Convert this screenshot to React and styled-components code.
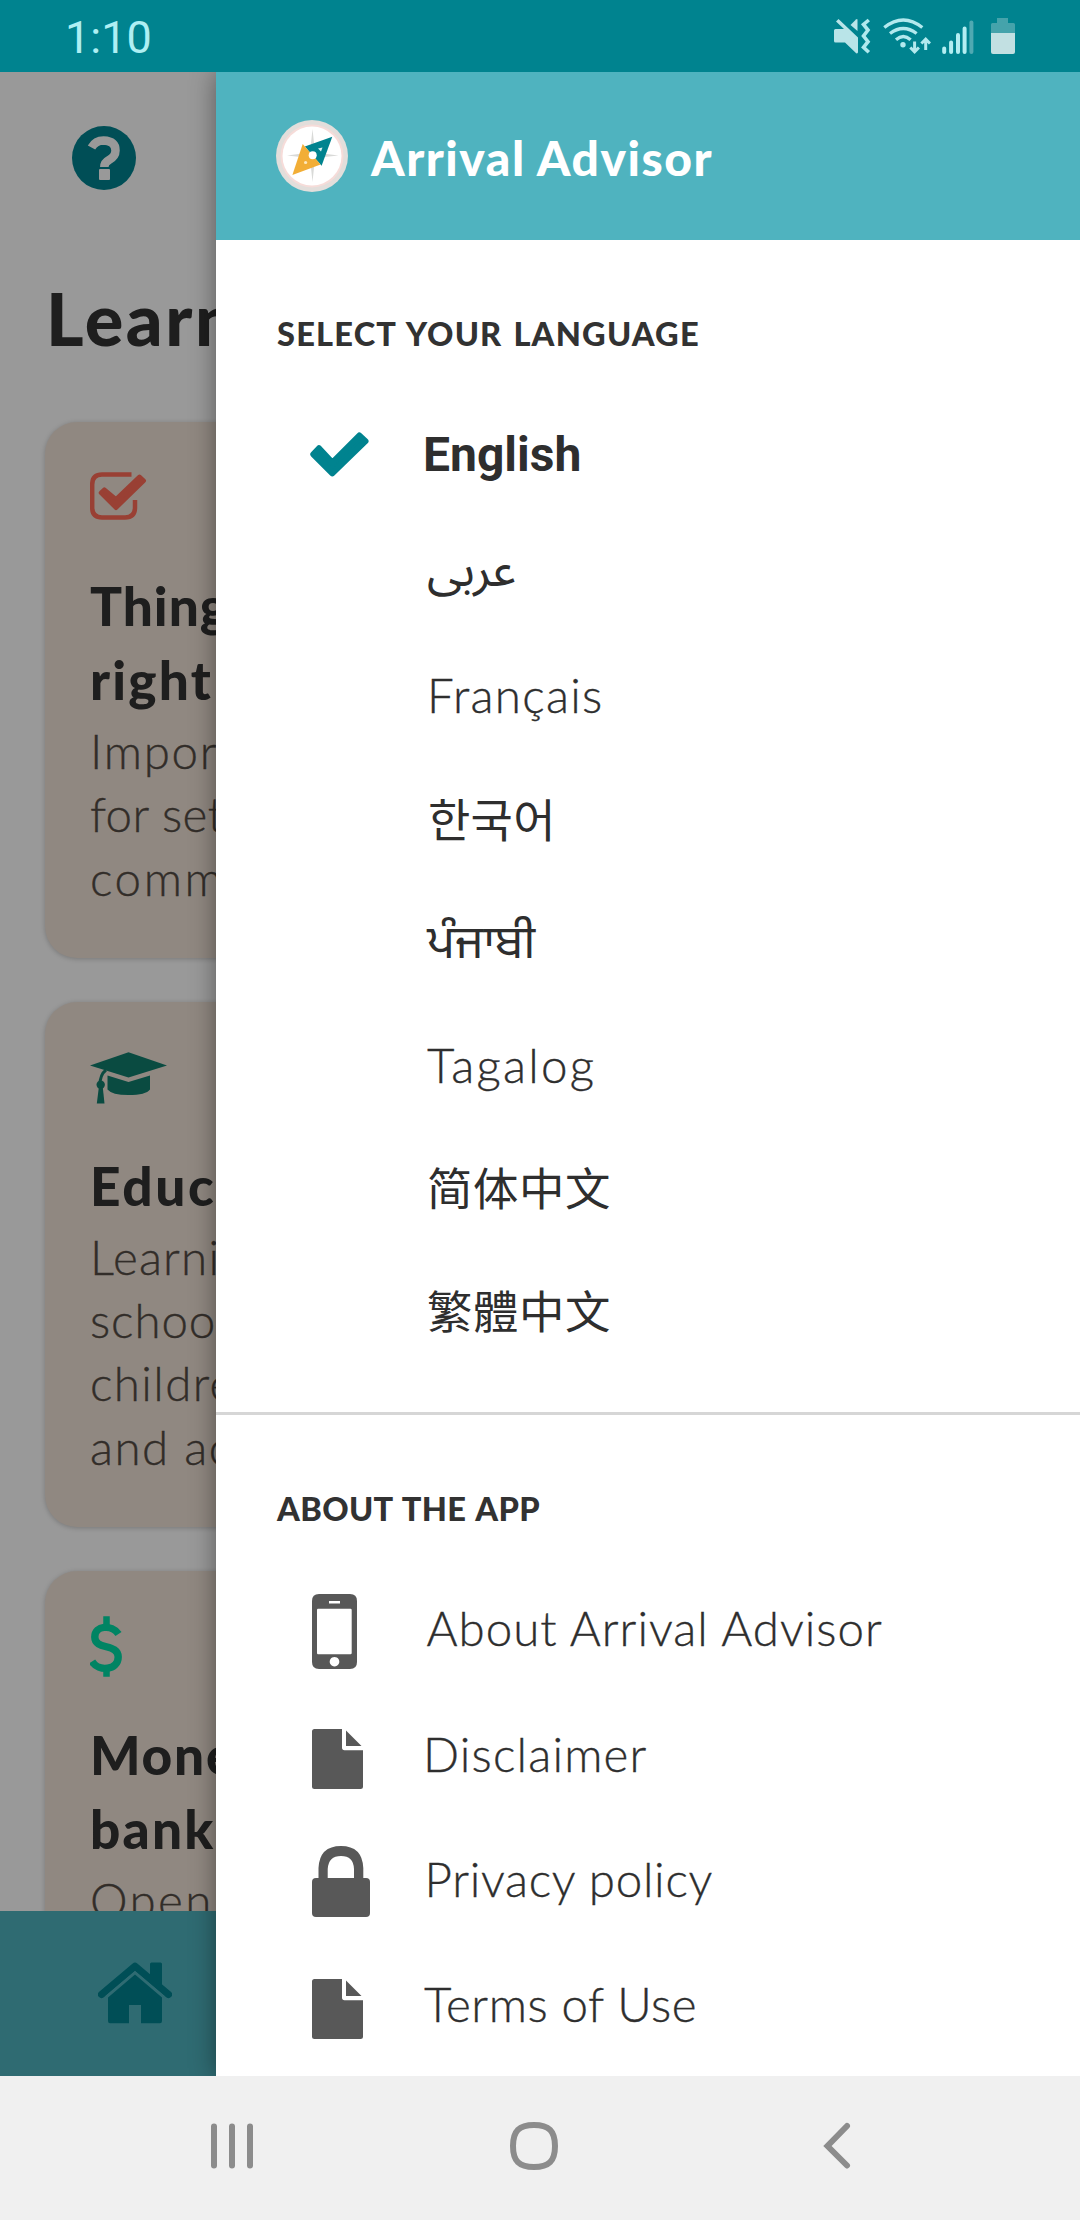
import React from "react";
import styled, { createGlobalStyle } from "styled-components";

const Global = createGlobalStyle`
  * { box-sizing: border-box; }
  body { margin: 0; font-family: Lato, "Liberation Sans", sans-serif; }
  svg { display: block; flex: none; }
`;
const Screen = styled.div`
  width: 1080px; height: 2220px; display: flex; flex-direction: column;
  overflow: hidden; background: #fff;
`;
const StatusBar = styled.header`
  height: 72px; flex: none; background: #00838f;
  display: flex; align-items: center; padding: 0 65px;
`;
const Clock = styled.span`
  flex: 1; padding-top: 4px; font-family: Roboto, sans-serif;
  font-size: 45px; line-height: 72px; color: #aeeff3;
`;
const StatusIcons = styled.div`
  display: flex; align-items: center; gap: 11px;
  svg:last-child { margin-left: 6px; }
`;
const Body = styled.div`position: relative; flex: 1; overflow: hidden;`;
const Page = styled.main`height: 100%; display: flex; flex-direction: column;`;
const Scroll = styled.div`flex: 1; min-height: 0; overflow: hidden; padding: 54px 45px 0;`;
const HelpRow = styled.div`padding-left: 27px;`;
const Heading = styled.h1`
  margin: 84px 0 59px 1px; font-size: 72px; font-weight: 900; line-height: 89px;
  letter-spacing: 2.6px; color: #323232; white-space: nowrap;
`;
const Cards = styled.div`display: flex; flex-direction: column; gap: 44px;`;
const Card = styled.section`
  flex: none; padding: 50px 45px 49px; border-radius: 32px;
  background: #f0e3d8; box-shadow: 0 1px 5px rgba(0, 0, 0, 0.22);
`;
const IconSlot = styled.div`height: 96px; padding-top: ${(p) => p.$y || 0}px;`;
const Line = styled.span`display: block; width: max-content; letter-spacing: ${(p) => p.$ls || 0}px;`;
const CardTitle = styled.h2`
  margin: 0 0 3px; font-size: 53.2px; line-height: 74px; font-weight: 900; color: #323232;
`;
const CardText = styled.p`
  margin: 0; font-size: 47.5px; line-height: 63.3px; font-weight: 300;
  color: #544c45; -webkit-text-stroke: 0.35px #544c45;
`;
const TabBar = styled.nav`flex: none; height: 165px; background: #4fb3bf; padding: 51px 98px;`;
const Scrim = styled.div`position: absolute; inset: 0; background: rgba(0, 0, 0, 0.4);`;
const Drawer = styled.aside`
  position: absolute; top: 0; right: 0; bottom: 0; width: 864px;
  background: #fff; box-shadow: 0 0 24px rgba(0, 0, 0, 0.42);
`;
const DrawerHeader = styled.div`
  height: 168px; background: #4fb3bf; display: flex; align-items: flex-start;
  gap: 23px; padding: 48px 60px 0;
`;
const Brand = styled.span`
  font-size: 48px; line-height: 76px; font-weight: 900; color: #fff;
  letter-spacing: 1.5px; white-space: nowrap;
`;
const Section = styled.section`
  padding: 74px 0 ${(p) => (p.$line ? 40 : 0)}px;
  border-bottom: ${(p) => (p.$line ? "3px solid #d6d6d6" : "0")};
`;
const SectionTitle = styled.h3`
  margin: 0 0 40px 61px; width: max-content; font-size: 32.6px; line-height: 40px;
  font-weight: 900; color: #323232; letter-spacing: ${(p) => p.$ls || 0}px;
  word-spacing: 2px;
`;
const Row = styled.div`
  height: ${(p) => p.$h || 123}px; display: flex; align-items: center;
  padding-left: ${(p) => p.$indent || 94}px;
`;
const RowIcon = styled.div`
  width: ${(p) => p.$w || 116}px; flex: none; margin-top: ${(p) => p.$y || 0}px;
`;
const Label = styled.span`
  font-family: ${(p) => p.$font || "Lato"}, Lato, sans-serif;
  font-size: ${(p) => p.$size || 47.5}px;
  font-weight: ${(p) => p.$weight || 300};
  line-height: 60px; color: #2e2e2e; white-space: nowrap;
  margin-left: ${(p) => p.$x || 0}px;
  margin-top: ${(p) => p.$y || 0}px;
  letter-spacing: ${(p) => p.$ls || 0}px;
  -webkit-text-stroke: ${(p) => (p.$weight ? 0 : 0.35)}px #2e2e2e;
`;
const NavBar = styled.footer`
  height: 144px; flex: none; background: #f0f0f0; display: flex;
  align-items: center; justify-content: space-between; padding: 0 220px 4px 208px;
`;

const Mute = () => (
  <svg width="38" height="36" viewBox="832 18 38 36" fill="#b9e4e8">
    <path d="M832 30.5q0-1.5 1.500-1.500H842L834 21.500 836.500 19 856 37.500V52q0 1.800-1.800 1.300L843 42.500H833.500Q832 42.500 832 41Z" />
    <path d="M848.500 25L854 19.400Q855.500 18.500 855.500 20V31Z" />
    <path d="M866.800 20L861.500 24.500 866 30 861.500 36 866 41.700 861.500 47.300 866.800 52.300" fill="none" stroke="#b0e9ee" strokeWidth="3.600" />
  </svg>
);
const Wifi = () => (
  <svg width="48" height="36" viewBox="881 18 48 36" fill="none" stroke="#b3e9ee" strokeWidth="3.400">
    <path d="M882.300 27.500Q901.300 12.500 920.300 27.500M888 33.500Q901.300 23.500 914.600 33.500M894 39.700Q901.300 33.500 908.600 39.700" />
    <circle cx="901" cy="44.700" r="2.700" fill="#b3e9ee" stroke="none" />
    <path d="M912.600 41.500V51M908.300 47.500L912.600 51.800 916.900 47.500M923.700 50V40M919.400 43.500L923.700 39.200 928 43.500" strokeWidth="3" />
  </svg>
);
const Signal = () => (
  <svg width="32" height="36" viewBox="941 18 32 36" stroke="#b3eef2" strokeWidth="4" strokeLinecap="round">
    <path d="M943.200 48.500V52M950.100 42.500V52M957 35V52M963.600 28.500V52" />
    <path d="M970.400 22.500V52" stroke="#4fa9b2" />
  </svg>
);
const Battery = () => (
  <svg width="24" height="36" viewBox="991 18 24 36">
    <path d="M997 18H1008V23H1013.500Q1015 23 1015 24.500V33H991V24.500Q991 23 992.500 23H997Z" fill="#45a3ab" />
    <path d="M991 33H1015V52Q1015 54 1013 54H993Q991 54 991 52Z" fill="#c2e0e2" />
  </svg>
);
const Help = () => (
  <svg width="64" height="64" viewBox="72 126 64 64">
    <circle cx="104" cy="158" r="32" fill="#00838f" />
    <path d="M91.500 147.500Q95.500 140.500 103.500 140.500Q115.500 141 115.500 150.500Q115.500 156.500 109 160Q104.300 162.500 104.300 167" fill="none" stroke="#fff" strokeWidth="8.500" />
    <rect x="99" y="169" width="11" height="11" rx="1" fill="#fff" />
  </svg>
);
const Compass = () => (
  <svg width="72" height="72" viewBox="276 120 72 72">
    <circle cx="312" cy="156" r="36" fill="#e2dedb" />
    <circle cx="312" cy="156" r="31.500" fill="#f6dcd9" />
    <circle cx="312" cy="156" r="29.500" fill="#fff" />
    <path d="M312.500 129L315 152.500 338.500 155.500 315 158 312.500 182 310 158 287 155.500 310 152.500Z" fill="#d9dad8" />
    <path d="M332.300 136.700L304.800 146.500 321.600 165.700Z" fill="#00838f" />
    <path d="M292.400 175L302.700 144 320.600 164.500Z" fill="#f2ae36" />
    <circle cx="312.700" cy="155.300" r="4" fill="#fff" />
    <path d="M318 148.500l4.500-1-1.500 4Z" fill="#d6eef0" />
    <circle cx="305.600" cy="162.500" r="1.600" fill="#fde9bd" />
  </svg>
);
const CheckBox = () => (
  <svg width="57" height="48" viewBox="90 472.500 57 48" fill="none" stroke="#ff6b57">
    <path d="M131.500 475H102Q92.200 475 92.200 485V508Q92.200 518 102 518H125Q135 518 135 508V500.500" strokeWidth="4.500" />
    <path d="M100.700 493.300L104.300 489.900 116 499.500 139.500 477 144 481.200 116 508.600Z" fill="#ff6b57" strokeWidth="4" strokeLinejoin="round" />
  </svg>
);
const Cap = () => (
  <svg width="77" height="52" viewBox="90 1052.500 77 52" fill="#117d6d">
    <path d="M90 1066L128.500 1052.700 167 1066 128.500 1078Z" />
    <path d="M107.500 1076L128.500 1082.500 150 1076V1090Q146 1095.500 128.500 1095.500 112 1095.500 107.500 1090Z" />
    <path d="M106 1070.500Q100 1075 99.800 1086" fill="none" stroke="#117d6d" strokeWidth="3" />
    <circle cx="100.700" cy="1085.300" r="4.200" />
    <path d="M98.800 1088H102.800L104.500 1104H96.800Z" />
  </svg>
);
const Dollar = () => (
  <svg width="32" height="61" viewBox="90.500 1616.500 32 61" fill="none" stroke="#00dca6" strokeWidth="6.500">
    <path d="M119 1634.500C112 1624.500 95.300 1626 95.300 1637.500C95.300 1651 118.700 1643.500 118.700 1657.500C118.700 1671 99 1672.500 92.500 1662" strokeWidth="7.400" />
    <path d="M107 1616.700V1628M107 1667V1677.300" />
  </svg>
);
const Home = () => (
  <svg width="74" height="62" viewBox="98 1962 74 62" fill="#00838f">
    <path d="M101.500 1994.500L135 1966.300 168.500 1994.500" fill="none" stroke="#00838f" strokeWidth="7.200" strokeLinecap="round" strokeLinejoin="round" />
    <path d="M150 1964Q150 1962.500 151.500 1962.500H160.500Q162 1962.500 162 1964V1986L150 1976Z" />
    <path d="M135 1974.500L162 1997.500V2021Q162 2023.300 160 2023.300H141V2005H129V2023.300H110Q108 2023.300 108 2021V1997.500Z" stroke="none" />
    <path d="M106 1996.500L135 1972 164 1996.500" fill="none" stroke="#4fb3bf" strokeWidth="1.600" />
  </svg>
);
const Check = () => (
  <svg width="59" height="45" viewBox="310 432 59 45">
    <path d="M313.300 454.300L319 448.200 332.300 462.600 359.300 435.500 365.500 441.200 332.300 473.300Z" fill="#00838f" stroke="#00838f" strokeWidth="6" strokeLinejoin="round" />
  </svg>
);
const Phone = () => (
  <svg width="45" height="75" viewBox="312 1594 45 75" fill="#585858" fillRule="evenodd">
    <path d="M319 1594H350Q357 1594 357 1601V1662Q357 1669 350 1669H319Q312 1669 312 1662V1601Q312 1594 319 1594ZM318 1608.700Q317 1608.700 317 1610V1653Q317 1654.300 318 1654.300H350.500Q351.700 1654.300 351.700 1653V1610Q351.700 1608.700 350.500 1608.700ZM329 1601V1603.500H340V1601ZM334.500 1656.900a4.800 4.800 0 1 0 .01 0Z" />
  </svg>
);
const Doc = () => (
  <svg width="51" height="60" viewBox="312 1728.500 51 60" fill="#585858">
    <path d="M314.500 1728.500H342V1747Q342 1749.700 344.500 1749.700H363V1786Q363 1788.500 360.500 1788.500H314.500Q312 1788.500 312 1786V1731Q312 1728.500 314.500 1728.500Z" />
    <path d="M346 1730L361.500 1745.500H346Z" />
  </svg>
);
const Lock = () => (
  <svg width="58" height="71" viewBox="312 1845 58 71" fill="#585858">
    <path d="M318.500 1880V1867Q319.500 1845 341 1845 362.300 1845 363.300 1867V1880H354V1868Q353.500 1855 341 1855 328.500 1855 327.700 1868V1880Z" />
    <rect x="312" y="1877" width="58" height="39" rx="4" />
  </svg>
);
const Recents = () => (
  <svg width="48" height="48" viewBox="208 2122 48 48" stroke="#8c8c8c" strokeWidth="6" strokeLinecap="round">
    <path d="M214 2126.500V2165.500M232 2126.500V2165.500M250 2126.500V2165.500" />
  </svg>
);
const HomeKey = () => (
  <svg width="48" height="48" viewBox="0 0 48 48">
    <path d="M24 3C39 3 45 9 45 24S39 45 24 45 3 39 3 24 9 3 24 3Z" fill="none" stroke="#8c8c8c" strokeWidth="6" />
  </svg>
);
const Back = () => (
  <svg width="48" height="48" viewBox="812 2122 48 48">
    <path d="M847 2126L827.500 2146 847 2165.500" fill="none" stroke="#8c8c8c" strokeWidth="6" strokeLinecap="round" />
  </svg>
);

const cards = [
  { id: "first-steps", icon: <CheckBox />, title: [["Thing", 1], ["right", 2.2]], text: [["Impor", 1.7], ["for set", 0.4], ["comm", 2.6]] },
  { id: "education", icon: <Cap />, title: [["Educ", 2.6]], text: [["Learni", 1.2], ["schoo", 0.9], ["childre", 1.4], ["and ac", 1.5]] },
  { id: "money", icon: <Dollar />, iconY: -5, title: [["Mone", 1.8], ["bank", 2.2]], text: [["Open", 2.4]] },
];
const languages = [
  { name: "English", font: "Roboto", weight: 700, size: 48, h: 121, x: -3, y: 1, icon: <Check /> },
  { name: "عربى", font: '"Noto Sans Arabic", "DejaVu Sans"', weight: 400, h: 119, x: 1, y: -8 },
  { name: "Français", x: 1, y: -2, ls: 1.3 },
  { name: "한국어", font: '"Noto Sans CJK KR"', weight: 400, size: 46, x: 2, y: -4, ls: 0.3 },
  { name: "ਪੰਜਾਬੀ", font: '"Noto Sans Gurmukhi"', weight: 400, size: 47, x: 1, y: 10 },
  { name: "Tagalog", x: 1, ls: 2.3 },
  { name: "简体中文", font: '"Noto Sans CJK SC"', weight: 400, size: 45.4, x: 1, y: -3, ls: 0.6 },
  { name: "繁體中文", font: '"Noto Sans CJK TC"', weight: 400, size: 45.4, x: 1, y: -3, ls: 0.6 },
];
const about = [
  { name: "About Arrival Advisor", icon: <Phone />, x: 0.5, y: -7, ls: 1 },
  { name: "Disclaimer", icon: <Doc />, iconY: 5, x: -3, y: -6, ls: 1.2 },
  { name: "Privacy policy", icon: <Lock />, x: -1.4, y: -6, ls: 0.7 },
  { name: "Terms of Use", icon: <Doc />, iconY: 5, x: -2, y: -6, ls: 0.5 },
];

export default function App() {
  return (
    <Screen>
      <Global />
      <StatusBar>
        <Clock>1:10</Clock>
        <StatusIcons><Mute /><Wifi /><Signal /><Battery /></StatusIcons>
      </StatusBar>
      <Body>
        <Page>
          <Scroll>
            <HelpRow><Help /></HelpRow>
            <Heading>Learn</Heading>
            <Cards>
              {cards.map((c) => (
                <Card key={c.id}>
                  <IconSlot>
                    <CardIcon $y={c.iconY}>{c.icon}</CardIcon>
                  </IconSlot>
                  <CardTitle>{c.title.map(([t, ls]) => <Line key={t} $ls={ls}>{t}</Line>)}</CardTitle>
                  <CardText>{c.text.map(([t, ls]) => <Line key={t} $ls={ls}>{t}</Line>)}</CardText>
                </Card>
              ))}
            </Cards>
          </Scroll>
          <TabBar><Home /></TabBar>
        </Page>
        <Scrim />
        <Drawer>
          <DrawerHeader><Compass /><Brand>Arrival Advisor</Brand></DrawerHeader>
          <Section $line>
            <SectionTitle $ls={1.2}>SELECT YOUR LANGUAGE</SectionTitle>
            {languages.map((l) => (
              <Row key={l.name} $h={l.h}>
                <RowIcon>{l.icon}</RowIcon>
                <Label $font={l.font} $size={l.size} $weight={l.weight} $x={l.x} $y={l.y} $ls={l.ls}>{l.name}</Label>
              </Row>
            ))}
          </Section>
          <Section>
            <SectionTitle $ls={0.35}>ABOUT THE APP</SectionTitle>
            {about.map((l) => (
              <Row key={l.name} $h={125} $indent={96}>
                <RowIcon $w={114} $y={l.iconY}>{l.icon}</RowIcon>
                <Label $x={l.x} $y={l.y} $ls={l.ls}>{l.name}</Label>
              </Row>
            ))}
          </Section>
        </Drawer>
      </Body>
      <NavBar><Recents /><HomeKey /><Back /></NavBar>
    </Screen>
  );
}

const CardIcon = styled.div`display: flow-root; svg { margin-top: ${(p) => p.$y || 0}px; }`;
